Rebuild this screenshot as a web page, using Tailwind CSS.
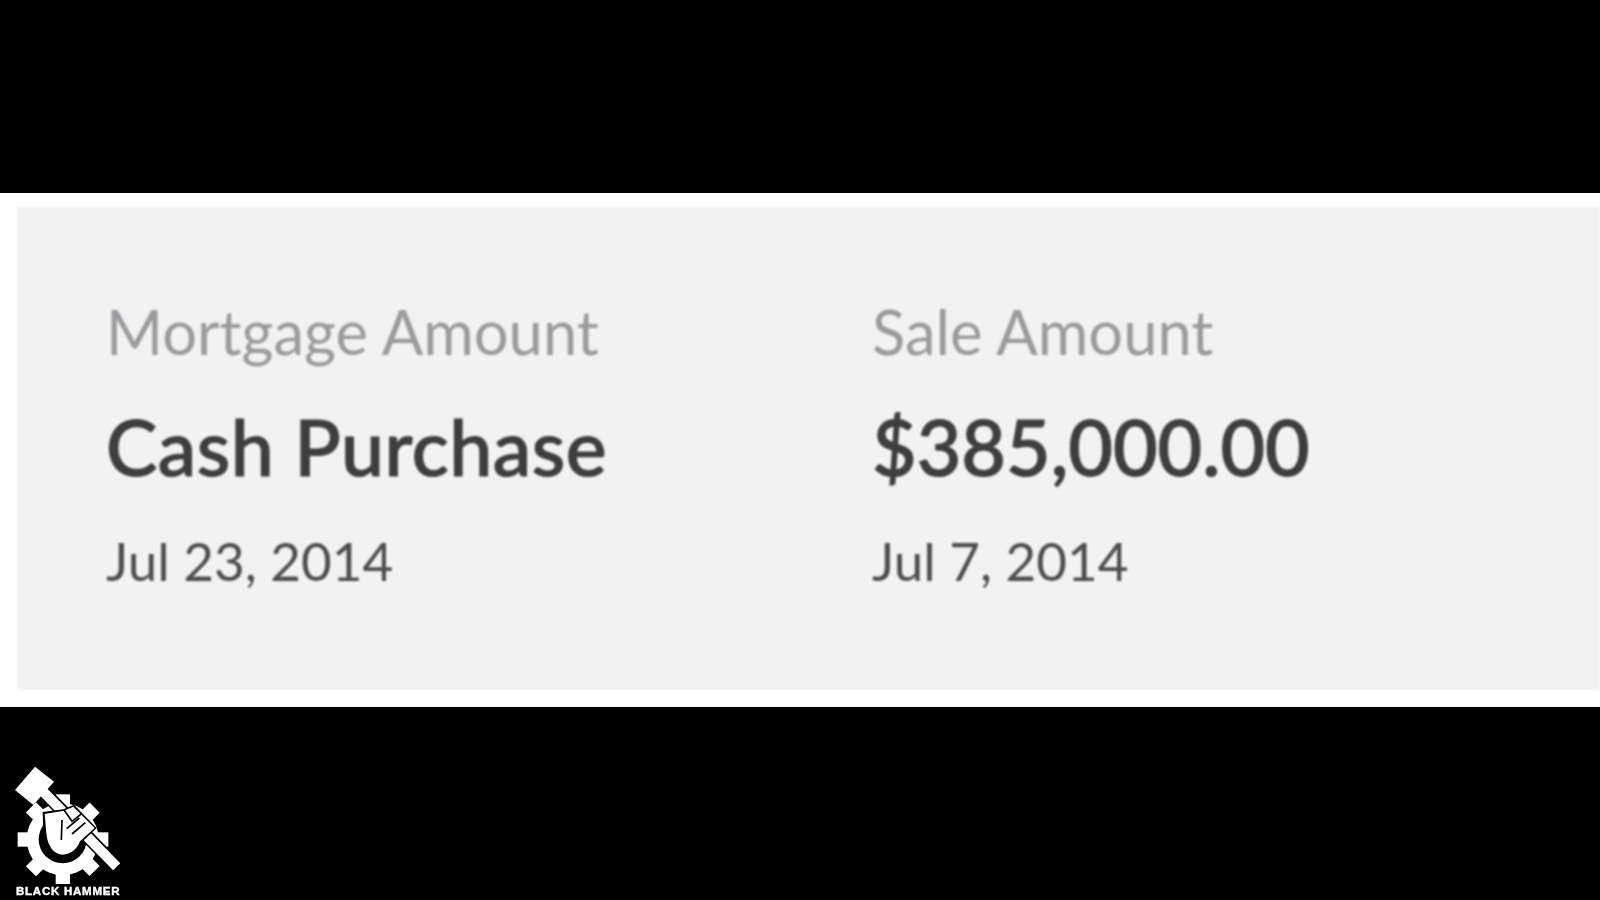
<!DOCTYPE html>
<html>
<head>
<meta charset="utf-8">
<script src="https://cdn.jsdelivr.net/npm/@tailwindcss/browser@4"></script>
</head>
<body class="bg-black">
<div class="w-[1600px] h-[900px] bg-black flex flex-col overflow-hidden font-['Lato',sans-serif]">
  <div class="h-[193px] shrink-0"></div>
  <div class="h-[514px] shrink-0 bg-white pl-[17px] pt-[14px] pb-[17px]">
    <div class="h-full bg-[#f2f2f2] pl-[89px] pt-[89px] grid grid-cols-[766px_1fr] blur-[0.8px]">
      <div>
        <div class="text-[61.5px] leading-[70px] text-[#9b9b9d]">Mortgage Amount</div>
        <div class="text-[77px] leading-[88px] mt-[36px] font-medium tracking-[0.5px] text-[#3e3e3e] [-webkit-text-stroke:1.2px_#3e3e3e]">Cash Purchase</div>
        <div class="text-[53px] leading-[64px] mt-[39px] text-[#4d4d4d]">Jul 23, 2014</div>
      </div>
      <div>
        <div class="text-[61.5px] leading-[70px] text-[#9b9b9d]">Sale Amount</div>
        <div class="text-[77px] leading-[88px] mt-[36px] font-medium text-[#3e3e3e] [-webkit-text-stroke:1.2px_#3e3e3e]">$385,000.00</div>
        <div class="text-[53px] leading-[64px] mt-[39px] text-[#4d4d4d]">Jul 7, 2014</div>
      </div>
    </div>
  </div>
  <div class="h-[193px] shrink-0 flex flex-col justify-end">
    <div class="w-[140px] h-[150px] flex flex-col">
      <svg class="w-[140px] h-[134px] shrink-0" viewBox="0 0 420 402" fill="none">
        <g fill="#fff">
          <circle cx="188" cy="268" r="108"/>
          <rect x="167" y="133" width="43" height="270"/>
          <rect x="53" y="247" width="272" height="43"/>
          <rect x="167" y="133" width="43" height="270" transform="rotate(45 188 268)"/>
          <rect x="167" y="133" width="43" height="270" transform="rotate(-45 188 268)"/>
        </g>
        <circle cx="188" cy="268" r="72" fill="#000"/>
        <path d="M130 125 L350 350" stroke="#000" stroke-width="40"/>
        <path d="M130 125 L350 350" stroke="#fff" stroke-width="30"/>
        <path d="M105 50 L162 95 L100 165 L45 120 Z" fill="#fff"/>
        <path d="M128 186 L190 178 L222 164 L290 234 L246 276 C238 300 216 322 186 322 C160 322 134 296 130 250 Z" fill="#000"/>
        <path d="M134 192 L192 182 L220 170 L284 234 L240 274 C232 296 212 314 188 314 C162 314 142 288 139 250 Z" fill="#fff"/>
        <g stroke="#000" stroke-width="5" fill="none">
          <path d="M192 180 L216 214 L246 190"/>
          <path d="M200 236 L238 204"/>
          <path d="M216 252 L256 218"/>
          <path d="M186 210 L184 270"/>
        </g>
      </svg>
      <div class="ml-[16px] w-[110px] text-[11.5px] leading-[14px] tracking-[0.75px] font-bold text-white whitespace-nowrap font-['Liberation_Sans',sans-serif] [-webkit-text-stroke:0.4px_#fff] blur-[0.3px]">BLACK HAMMER</div>
    </div>
  </div>
</div>
</body>
</html>
